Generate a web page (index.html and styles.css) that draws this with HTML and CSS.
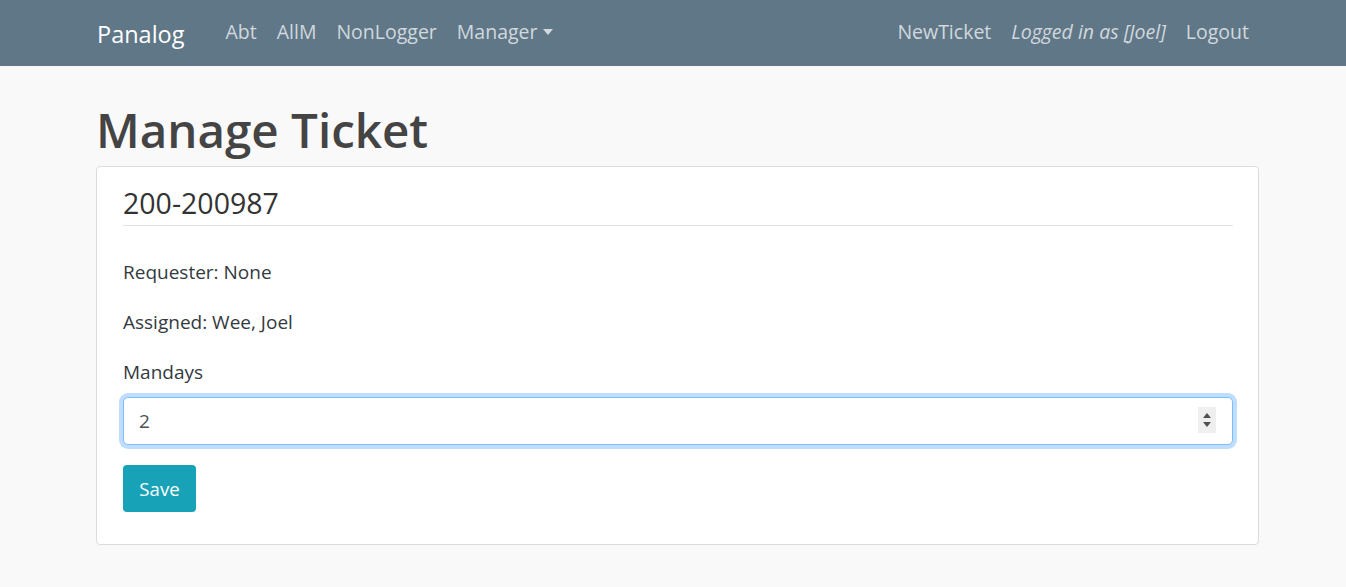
FILE: index.html
```html
<!DOCTYPE html>
<html lang="en">
<head>
<meta charset="utf-8">
<title>Manage Ticket</title>
<link rel="stylesheet" href="styles.css">
</head>
<body>
<nav class="navbar">
  <div class="nav-inner">
    <a class="brand" href="#">Panalog</a>
    <ul class="nav-left">
      <li><a class="nav-link" href="#">Abt</a></li>
      <li><a class="nav-link" href="#">AllM</a></li>
      <li><a class="nav-link" href="#">NonLogger</a></li>
      <li><a class="nav-link dropdown" href="#">Manager<span class="caret"></span></a></li>
    </ul>
    <ul class="nav-right">
      <li><a class="nav-link" href="#">NewTicket</a></li>
      <li><span class="nav-link user">Logged in as [Joel]</span></li>
      <li><a class="nav-link" href="#">Logout</a></li>
    </ul>
  </div>
</nav>
<main class="container">
  <h1 class="page-title">Manage Ticket</h1>
  <section class="card">
    <h4 class="card-title">200-200987</h4>
    <hr class="divider">
    <p class="info">Requester: None</p>
    <p class="info">Assigned: Wee, Joel</p>
    <form class="form">
      <label class="label" for="mandays">Mandays</label>
      <div class="input-wrap">
        <input class="input" id="mandays" type="text" value="2">
        <span class="spinner"><span class="up"></span><span class="down"></span></span>
      </div>
      <button class="btn" type="button">Save</button>
    </form>
  </section>
</main>
</body>
</html>
```
FILE: styles.css
```css
* { box-sizing: border-box; }
html, body { margin: 0; padding: 0; }
body {
  background: #f9f9f9;
  font-family: "Open Sans", "Noto Sans", sans-serif;
  color: #333a40;
  font-size: 19px;
}
a { text-decoration: none; }
ul { list-style: none; margin: 0; padding: 0; }

.navbar {
  background: #607788;
  height: 66px;
}
.nav-inner {
  height: 66px;
  margin: 0 87px 0 96px;
  display: flex;
  align-items: center;
}
.brand {
  color: #fff;
  font-size: 23.5px;
  margin-right: 31px;
  padding-left: 1px;
  padding-top: 1px;
}
.nav-left, .nav-right {
  display: flex;
  align-items: center;
}
.nav-right { margin-left: auto; }
.nav-link {
  display: block;
  color: rgba(255, 255, 255, 0.72);
  font-size: 19.5px;
  padding: 0 10px;
  line-height: 30px;
  margin-top: -2px;
}
.nav-link.user { font-style: italic; }
.caret {
  display: inline-block;
  width: 0;
  height: 0;
  border-top: 6px solid rgba(255, 255, 255, 0.72);
  border-left: 5.5px solid transparent;
  border-right: 5.5px solid transparent;
  margin-left: 5px;
  vertical-align: 4px;
}

.container {
  margin: 0 87px 0 96px;
}
.page-title {
  margin: 35px 0 8px 0;
  font-size: 47.5px;
  font-weight: 600;
  line-height: 1.2;
  color: #444;
}
.card {
  background: #fff;
  border: 1px solid #dcdcdc;
  border-radius: 4px;
  padding: 19px 25px 32px 26px;
}
.card-title {
  margin: 0;
  font-size: 28.5px;
  font-weight: 400;
  line-height: 1.2;
  color: #333;
}
.divider {
  margin: 5px 0 0 0;
  border: 0;
  border-top: 1px solid #e2e2e2;
}
.info {
  margin: 31px 0 20px 0;
  line-height: 30px;
}
.info + .info { margin-top: 0; }
.form { margin: 0; }
.label {
  display: block;
  line-height: 30px;
  margin-bottom: 10px;
}
.input-wrap {
  position: relative;
}
.input {
  display: block;
  width: 100%;
  height: 48px;
  padding: 0 15px;
  font-family: inherit;
  font-size: 19px;
  color: #495057;
  background: #fff;
  border: 1px solid #80bdff;
  border-radius: 5px;
  box-shadow: 0 0 0 4px rgba(0, 123, 255, 0.25);
  outline: none;
}
.spinner {
  position: absolute;
  right: 17px;
  top: 10px;
  width: 18px;
  height: 26px;
  background: #efefef;
  display: flex;
  flex-direction: column;
  align-items: center;
  justify-content: center;
  gap: 4px;
}
.up, .down {
  width: 0;
  height: 0;
  border-left: 4px solid transparent;
  border-right: 4px solid transparent;
}
.up { border-bottom: 5px solid #505050; }
.down { border-top: 5px solid #505050; }
.btn {
  display: block;
  margin-top: 20px;
  width: 73px;
  height: 47px;
  background: #17a2b8;
  color: #fff;
  border: 0;
  border-radius: 4px;
  font-family: inherit;
  font-size: 18.6px;
  padding: 0;
}
```
